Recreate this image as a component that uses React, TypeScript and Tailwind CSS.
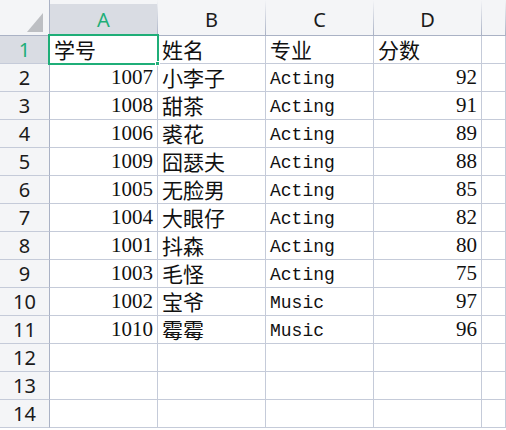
import React from "react";

const rows: [string, string, string, string][] = [
  ["1007", "小李子", "Acting", "92"],
  ["1008", "甜茶", "Acting", "91"],
  ["1006", "裘花", "Acting", "89"],
  ["1009", "囧瑟夫", "Acting", "88"],
  ["1005", "无脸男", "Acting", "85"],
  ["1004", "大眼仔", "Acting", "82"],
  ["1001", "抖森", "Acting", "80"],
  ["1003", "毛怪", "Acting", "75"],
  ["1002", "宝爷", "Music", "97"],
  ["1010", "霉霉", "Music", "96"],
];

const cols = ["A", "B", "C", "D"];
const grid = "grid grid-cols-[50px_108px_108px_108px_108px_1fr]";
const sans = { fontFamily: '"Noto Sans", "Noto Sans CJK SC", sans-serif' };
const cjk = { fontFamily: '"Noto Sans CJK SC", sans-serif' };
const serif = { fontFamily: '"Liberation Serif", "Noto Sans CJK SC", serif' };
const mono = { fontFamily: '"Liberation Mono", monospace' };

function HeadCell({ label, active }: { label?: string; active?: boolean }) {
  return (
    <div className="flex h-[36px] border-b border-[#aab2c5]">
      <div
        className={`mt-[4px] flex flex-1 items-center justify-center text-[20px] ${
          active ? "bg-[#d9dce3] text-[#1fae78]" : "text-[#1b1b1b]"
        }`}
        style={sans}
      >
        {label}
      </div>
      <div className="w-px bg-gradient-to-b from-[#f4f5f7] to-[#aab2c5]" />
    </div>
  );
}

function Cell({ children, right, font }: { children?: React.ReactNode; right?: boolean; font?: React.CSSProperties }) {
  return (
    <div
      className={`flex h-[28px] items-center whitespace-nowrap border-b border-r border-[#c5cbd9] px-[4px] text-[21px] leading-[27px] text-[#111] ${
        right ? "justify-end" : ""
      }`}
      style={font}
    >
      {children}
    </div>
  );
}

function RowHead({ n, active }: { n: number; active?: boolean }) {
  return (
    <div
      className={`flex h-[28px] items-center justify-center border-b border-r border-b-[#c5cbd9] border-r-[#aab2c5] text-[20px] ${
        active ? "bg-[#d9dce3] text-[#1fae78]" : "bg-[#f4f5f7] text-[#1b1b1b]"
      }`}
      style={sans}
    >
      {n}
    </div>
  );
}

export default function App() {
  return (
    <div className="relative h-[430px] w-[506px] overflow-hidden bg-white">
      <div className={`${grid} bg-[#f4f5f7]`}>
        <div className="relative flex h-[36px] border-b border-r border-[#aab2c5]">
          <svg className="absolute left-[27px] top-[13px]" width="16" height="19" viewBox="0 0 16 19">
            <polygon points="0,19 16,19 16,0" fill="#bdbfc3" />
          </svg>
        </div>
        {cols.map((c) => (
          <HeadCell key={c} label={c} active={c === "A"} />
        ))}
        <HeadCell />
      </div>

      <div className={grid}>
        <RowHead n={1} active />
        <Cell font={cjk}>学号</Cell>
        <Cell font={cjk}>姓名</Cell>
        <Cell font={cjk}>专业</Cell>
        <Cell font={cjk}>分数</Cell>
        <Cell />
        {rows.map((r, i) => (
          <React.Fragment key={r[0]}>
            <RowHead n={i + 2} />
            <Cell right font={serif}>{r[0]}</Cell>
            <Cell font={cjk}>{r[1]}</Cell>
            <Cell font={mono}>
              <span className="pt-[3px] text-[18px]">{r[2]}</span>
            </Cell>
            <Cell right font={serif}>{r[3]}</Cell>
            <Cell />
          </React.Fragment>
        ))}
        {[12, 13, 14].map((n) => (
          <React.Fragment key={n}>
            <RowHead n={n} />
            <Cell />
            <Cell />
            <Cell />
            <Cell />
            <Cell />
          </React.Fragment>
        ))}
      </div>

      {/* selection */}
      <div className="absolute left-[48px] top-[34px] h-[31px] w-[111px] border-2 border-[#1fae78]" />
      <div className="absolute left-[155px] top-[61px] h-[5px] w-[5px] border border-white bg-[#1fae78]" />
    </div>
  );
}
